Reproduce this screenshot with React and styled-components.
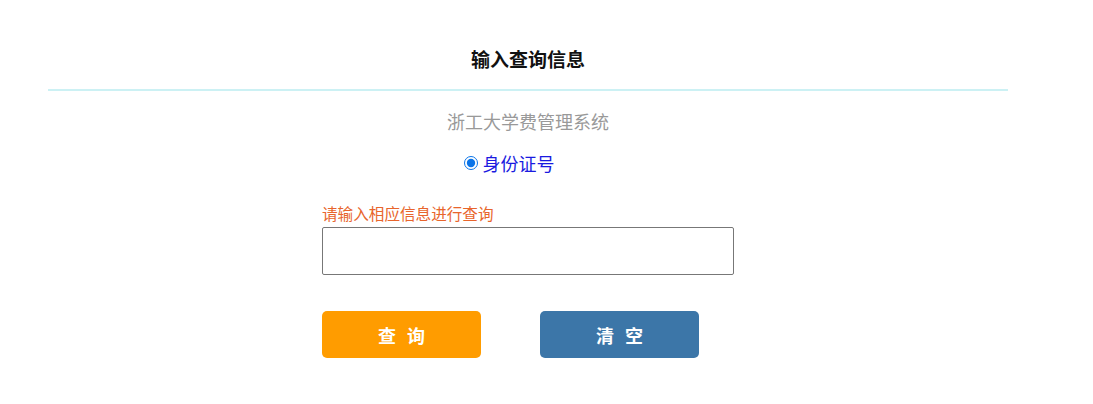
import React, { useState } from "react";
import styled, { createGlobalStyle } from "styled-components";

const GlobalStyle = createGlobalStyle`
  body {
    margin: 0;
    background: #fff;
    font-family: "Noto Sans CJK SC", "Noto Sans", sans-serif;
  }
`;

const Page = styled.div`
  width: 960px;
  margin-left: 48px;
  padding-top: 43px;
`;

const Title = styled.h3`
  margin: 0;
  height: 32px;
  line-height: 32px;
  text-align: center;
  font-size: 19px;
  font-weight: bold;
  color: #111;
`;

const Divider = styled.div`
  margin-top: 14px;
  height: 2px;
  background: #ccf1f4;
`;

const SubTitle = styled.p`
  margin: 17px 0 0;
  text-align: center;
  font-size: 18px;
  line-height: 26px;
  color: #999;
`;

const RadioRow = styled.label`
  display: flex;
  justify-content: center;
  align-items: center;
  gap: 5px;
  margin-top: 16px;
  padding-right: 38px;
  font-size: 18px;
  line-height: 26px;
  color: #1a1ae0;
  input {
    margin: 0;
    width: 14px;
    height: 14px;
    accent-color: #0a74e8;
  }
`;

const Form = styled.div`
  width: 412px;
  margin: 26px auto 0;
`;

const Hint = styled.div`
  font-size: 15.6px;
  line-height: 22px;
  color: #e8652c;
`;

const Field = styled.input`
  display: block;
  box-sizing: border-box;
  width: 412px;
  height: 48px;
  margin-top: 3px;
  border: 1px solid #777;
  border-radius: 2px;
  outline: none;
`;

const Buttons = styled.div`
  display: flex;
  gap: 59px;
  margin-top: 36px;
`;

const Button = styled.button`
  width: 159px;
  height: 47px;
  border: none;
  border-radius: 5px;
  background: ${(p) => p.$bg};
  color: #fff;
  font-family: "Noto Sans CJK SC", sans-serif;
  font-size: 18px;
  font-weight: bold;
  letter-spacing: 11px;
  text-indent: 11px;
  cursor: pointer;
`;

export default function App() {
  const [value, setValue] = useState("");
  return (
    <>
      <GlobalStyle />
      <Page>
        <Title>输入查询信息</Title>
        <Divider />
        <SubTitle>浙工大学费管理系统</SubTitle>
        <RadioRow>
          <input type="radio" name="kind" defaultChecked />
          身份证号
        </RadioRow>
        <Form>
          <Hint>请输入相应信息进行查询</Hint>
          <Field value={value} onChange={(e) => setValue(e.target.value)} />
          <Buttons>
            <Button $bg="#ff9c00">查询</Button>
            <Button $bg="#3c76a8" onClick={() => setValue("")}>
              清空
            </Button>
          </Buttons>
        </Form>
      </Page>
    </>
  );
}
